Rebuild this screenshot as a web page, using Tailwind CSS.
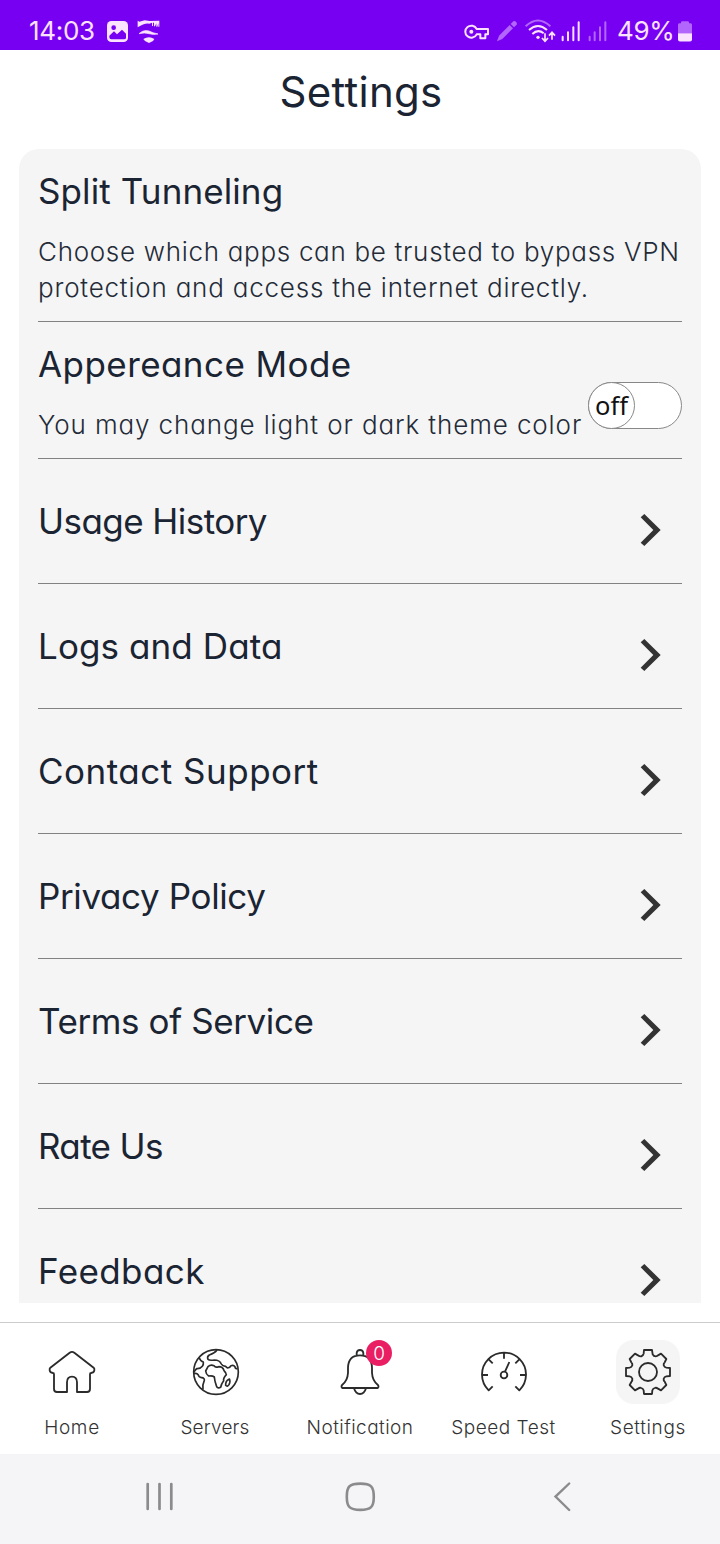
<!DOCTYPE html>
<html lang="en">
<head>
<meta charset="utf-8">
<title>Settings</title>
<script src="https://cdn.jsdelivr.net/npm/@tailwindcss/browser@4"></script>
</head>
<body class="bg-white">
<svg class="hidden"><symbol id="chevron" viewBox="210 432 63 96"><path d="M223 432 272 480 223 528 212 518 250 480 212 442Z" fill="#333"/></symbol></svg>
<div class="w-[720px] h-[1544px] flex flex-col overflow-hidden bg-white font-['Inter','Liberation_Sans',sans-serif] [font-feature-settings:'cv11'] text-[#1b2432] whitespace-nowrap">
  <header class="h-[50px] shrink-0 bg-[#7700f2] text-[#fbe2ff] flex items-start text-[26px] leading-[32px] pt-[15px]">
    <span class="ml-[29px] w-[76px] font-normal tracking-[-0.3px]">14:03</span>
    <svg class="w-[60px] h-[30px]" viewBox="315 45 180 90">
      <rect x="321" y="63" width="63" height="63" rx="13" fill="currentColor"/>
      <circle cx="341" cy="83" r="7" fill="#7700f2"/>
      <path d="M328 107 342 94 351 103 366 89 378 101V113Q378 118 372 118H334Q328 118 328 112Z" fill="#7700f2"/>
      <path d="M413 62 418 65Q426 64 434 61L449 63 478 62V80H475V70L472 80H469V70L465 79H462V68H459V78H456V68L448 71Q434 68 413 82Z" fill="currentColor"/>
      <path d="M417 101Q431 88 447 93 459 99 474 102 460 105 447 101 434 97 417 101Z" fill="currentColor" stroke="currentColor" stroke-width="2"/>
      <path d="M430 117Q447 106 463 117L459 123 447 129 435 123Z" fill="currentColor"/>
    </svg>
    <svg class="w-[147px] h-[30px] ml-[298px]" viewBox="39 45 441 90" fill="none" stroke="currentColor" stroke-width="6">
      <path d="M80 87A18 18 0 1 0 80 103H91V115H106V103H114V87Z" stroke-linejoin="round"/>
      <circle cx="64" cy="95" r="6" fill="currentColor" stroke="none"/>
      <g stroke="none" fill="#b366fb"><path d="M141 124 147 107 179 75 189 85 157 117Z"/><path d="M182 72 190 64Q193 62 196 64L200 68Q202 71 200 74L192 82Z"/></g>
      <path d="M227 79Q264 44 301 79" stroke="#b366fb"/>
      <path d="M237 90Q264 66 291 90M247 102Q264 86 281 100"/>
      <circle cx="264" cy="112" r="5" fill="currentColor" stroke="none"/>
      <path d="M285 100V123M276 114 285 124 294 114M306 119V98M297 107 306 97 315 107" stroke-width="5"/>
      <path d="M338 110V121M354 97V121M370 82V121M386 67V121" stroke-linecap="round"/>
      <path d="M419 110V121M434 97V121M450 82V121M466 67V121" stroke="#b366fb" stroke-linecap="round"/>
    </svg>
    <span class="ml-[7px] w-[61px] tracking-[-0.3px]">49%</span>
    <svg class="w-[14px] h-[21px] mt-[6px]" viewBox="684 62 42 62"><path d="M693 65Q693 62 697 62H713Q717 62 717 65V68H722Q726 68 726 73V98H684V73Q684 68 688 68H693Z" fill="#b366fb"/><path d="M684 98H726V117Q726 123 720 123H690Q684 123 684 117Z" fill="currentColor"/></svg>
  </header>
  <h1 class="self-center mt-[16px] h-[51px] leading-[51px] text-[42px] font-normal tracking-[0.3px] pl-[2px]">Settings</h1>
  <main class="mx-[19px] mt-[32px] h-[1154px] shrink-0 overflow-hidden px-[19px] bg-[#f5f5f5] rounded-t-[20px] text-[35px] leading-[51px]">
    <section class="h-[173px] pt-[17px] border-b border-[#828282]">
      <h2 class="tracking-[0.1px]">Split Tunneling</h2>
      <p class="mt-[17px] text-[26px] leading-[36px] font-light text-[#242b38]"><span class="tracking-[0.7px]">Choose which apps can be trusted to bypass VPN</span><br><span class="tracking-[0.79px]">protection and access the internet directly.</span></p>
    </section>
    <section class="h-[137px] flex justify-between border-b border-[#828282]">
      <div class="pt-[17px]">
        <h2 class="tracking-[0.43px]">Appereance Mode</h2>
        <p class="mt-[17px] text-[26px] leading-[36px] font-light text-[#242b38] tracking-[0.89px]">You may change light or dark theme color</p>
      </div>
      <div class="mt-[60px] w-[94px] h-[47px] -ml-4 shrink-0 rounded-full border border-[#888] bg-white flex items-center">
        <span class="-ml-px size-[47px] rounded-full border border-[#888] bg-white flex items-center justify-center pb-[2px] text-[25.5px] leading-[30px] text-[#111] font-['Noto_Sans',sans-serif]">off</span>
      </div>
    </section>
    <div class="h-[125px] flex justify-between border-b border-[#828282] pr-[21px]"><h2 class="mt-[37px] tracking-[-0.55px]">Usage History</h2><svg class="w-[21px] h-[32px] mt-[55px]"><use href="#chevron"/></svg></div>
    <div class="h-[125px] flex justify-between border-b border-[#828282] pr-[21px]"><h2 class="mt-[37px] tracking-[0.1px]">Logs and Data</h2><svg class="w-[21px] h-[32px] mt-[55px]"><use href="#chevron"/></svg></div>
    <div class="h-[125px] flex justify-between border-b border-[#828282] pr-[21px]"><h2 class="mt-[37px] tracking-[0.5px]">Contact Support</h2><svg class="w-[21px] h-[32px] mt-[55px]"><use href="#chevron"/></svg></div>
    <div class="h-[125px] flex justify-between border-b border-[#828282] pr-[21px]"><h2 class="mt-[37px] tracking-[-0.38px]">Privacy Policy</h2><svg class="w-[21px] h-[32px] mt-[55px]"><use href="#chevron"/></svg></div>
    <div class="h-[125px] flex justify-between border-b border-[#828282] pr-[21px]"><h2 class="mt-[37px] tracking-[-0.4px]">Terms of Service</h2><svg class="w-[21px] h-[32px] mt-[55px]"><use href="#chevron"/></svg></div>
    <div class="h-[125px] flex justify-between border-b border-[#828282] pr-[21px]"><h2 class="mt-[37px] tracking-[-0.65px]">Rate Us</h2><svg class="w-[21px] h-[32px] mt-[55px]"><use href="#chevron"/></svg></div>
    <div class="h-[125px] flex justify-between pr-[21px]"><h2 class="mt-[37px] tracking-[0.4px]">Feedback</h2><svg class="w-[21px] h-[32px] mt-[55px]"><use href="#chevron"/></svg></div>
  </main>
  <nav class="mt-[19px] h-[132px] shrink-0 border-t border-[#ccc] pt-[17px] grid grid-cols-5 text-[19px] leading-[24px] font-light text-[#333]">
    <a class="flex flex-col items-center gap-[12px]">
      <svg class="size-16" viewBox="0 0 192 192" fill="none" stroke="#2b2b2b" stroke-width="5.5" stroke-linejoin="round"><path d="M89 38Q96 33 103 38L161 83Q164 86 163 91 162 98 153 99 150 99 150 103V147Q150 156 141 156H111V127Q111 110 96 110 81 110 81 127V156H51Q42 156 42 147V103Q42 99 39 99 30 98 29 91 28 86 31 83Z"/></svg>
      <span class="tracking-[0.7px]">Home</span>
    </a>
    <a class="flex flex-col items-center gap-[12px]">
      <svg class="size-16" viewBox="0 0 192 192" fill="none" stroke="#2b2b2b" stroke-width="5" stroke-linejoin="round"><circle cx="96" cy="96" r="67"/><path d="M99 30Q92 40 76 45 68 50 72 58 76 62 91 60 107 60 112 72 115 78 125 79 126 82 131 84 138 84 141 77 149 74 153 80 153 86 161 86M46 54Q50 64 58 66 59 73 55 79 49 87 38 86 33 91 29 97M30 101Q38 98 43 105 44 112 53 113 62 114 61 121 55 133 57 149"/><path d="M72 80Q80 72 90 77 94 84 104 80 117 80 120 92 127 99 127 104 117 115 119 122 112 131 110 142 100 147 97 137 92 124 91 111 85 106 74 108 66 103 65 93ZM136 117Q140 124 135 134 130 142 125 136 124 122 136 117Z"/></svg>
      <span class="tracking-[0.15px] pr-[2px]">Servers</span>
    </a>
    <a class="flex flex-col items-center gap-[12px]">
      <span class="relative size-16">
        <svg class="size-16" viewBox="0 0 192 192" fill="none" stroke="#2b2b2b" stroke-width="5.5" stroke-linejoin="round"><path d="M86 46V39Q87 30 96 30 105 30 106 39V46M60 83Q61 46 96 46 131 46 132 83V98Q133 121 149 134 154 140 149 144H43Q38 140 43 134 59 121 60 98ZM78 145Q83 162 96 162 109 162 114 145"/></svg>
        <span class="absolute left-[38px] top-0 size-[26px] rounded-full bg-[#e91e63] text-white flex items-center justify-center pt-[2px] text-[19px]">0</span>
      </span>
      <span class="tracking-[0.45px]">Notification</span>
    </a>
    <a class="flex flex-col items-center gap-[12px]">
      <svg class="size-16" viewBox="0 0 192 192" fill="none" stroke="#2b2b2b" stroke-width="5.5" stroke-linejoin="round"><path d="M62 139 50 151A66 66 0 1 1 142 151L130 139M96 39V56M30 105H48M162 105H144M50 58 62 70M142 58 130 70M99 95 112 66"/><circle cx="96" cy="105" r="10"/></svg>
      <span class="tracking-[0.52px] pr-px">Speed Test</span>
    </a>
    <a class="flex flex-col items-center gap-[12px]">
      <svg class="size-16 rounded-[18px] bg-[#f5f5f5]" viewBox="0 0 192 192" fill="none" stroke="#2b2b2b" stroke-width="5.5" stroke-linejoin="round"><circle cx="96" cy="96" r="27"/><path d="M84 30H108L110 43Q113 49 119 49 124 49 126 46L135 41 151 57 146 67Q142 71 143 76 145 82 151 83L162 84V108L151 109Q145 110 143 116 142 121 146 125L151 135 135 151 126 146Q121 142 116 144 110 146 109 151L108 162H84L83 151Q82 146 76 144 71 142 66 146L57 151 41 135 46 126Q50 121 49 116 47 110 41 109L30 108V84L41 83Q47 82 49 76 50 71 46 67L41 57 57 41 66 46Q71 50 76 49 82 46 83 41Z"/></svg>
      <span class="tracking-[0.65px]">Settings</span>
    </a>
  </nav>
  <footer class="h-[90px] shrink-0 bg-[#f5f5f8] flex items-start pt-[27px] text-[#8b8b8d]">
    <svg class="w-[30px] h-[32px] ml-[145px]" viewBox="0 0 30 32" stroke="currentColor" stroke-width="2.7" stroke-linecap="round"><path d="M2.7 3V28M14.5 3V28M26.3 3V28"/></svg>
    <svg class="w-[32px] h-[32px] ml-[169px]" viewBox="0 0 32 32" fill="none" stroke="currentColor" stroke-width="2.6"><path d="M16.3 2.6C27 2.6 29.8 5.5 29.8 15.7S27 28.9 16.3 28.9 2.8 26 2.8 15.7 5.6 2.6 16.3 2.6Z"/></svg>
    <svg class="w-[20px] h-[32px] ml-[176px]" viewBox="0 0 20 32" fill="none" stroke="currentColor" stroke-width="2.4" stroke-linecap="round"><path d="M17.2 2.5 3.5 15.6 17.2 29"/></svg>
  </footer>
</div>
</body>
</html>
